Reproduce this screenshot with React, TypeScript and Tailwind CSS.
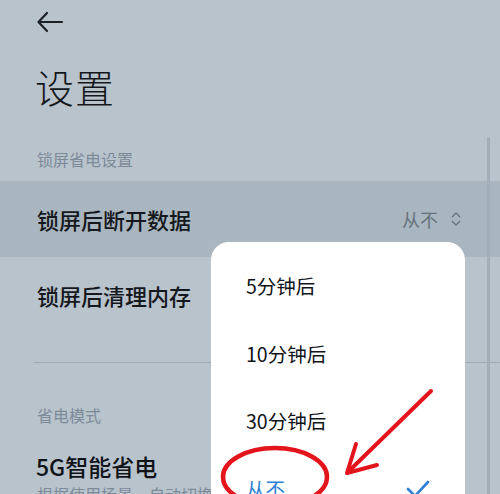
import { ChevronsUpDown } from 'lucide-react'

const FONT = { fontFamily: '"Noto Sans CJK SC", "Noto Sans", sans-serif' }

const OPTIONS = ['5分钟后', '10分钟后', '30分钟后']

export default function App() {
  return (
    <div className="relative w-[500px] h-[494px] overflow-hidden bg-[#b9c3cc]" style={FONT}>
      {/* 返回 */}
      <div className="pt-[9px] pl-[36px] h-[48px]">
        <svg width="28" height="26" viewBox="0 0 28 26" fill="none" stroke="#1c2126" strokeWidth="2.2" strokeLinecap="round" strokeLinejoin="round">
          <path d="M26 13H3" />
          <path d="M11 4L2.5 13L11 22" />
        </svg>
      </div>

      <h1 className="pl-[35px] mt-[10px] h-[56px] text-[39px] leading-[56px] font-light text-[#14181c] tracking-[1px]">设置</h1>

      <div className="pl-[37px] mt-[33px] h-[24px] text-[16px] leading-[24px] text-[#7d8a9a]">锁屏省电设置</div>

      {/* 行 */}
      <div className="mt-[10px] h-[76px] bg-[#aab6bf] flex items-center justify-between pl-[37px] pr-[35px]">
        <span className="text-[22px] font-medium text-[#15191d]">锁屏后断开数据</span>
        <span className="flex items-center gap-[9px] text-[18px] text-[#66717b]">
          从不
          <ChevronsUpDown size={18} strokeWidth={1.6} />
        </span>
      </div>
      <div className="h-[76px] flex items-center pl-[37px]">
        <span className="text-[22px] font-medium text-[#15191d]">锁屏后清理内存</span>
      </div>

      <div className="mt-[29px] ml-[34px] h-[1px] bg-[#9ea9b3]" />

      <div className="pl-[37px] mt-[40px] h-[24px] text-[16px] leading-[24px] text-[#7d8a9a]">省电模式</div>
      <div className="pl-[36px] mt-[24px] text-[23px] leading-[30px] font-medium text-[#101418]">5G智能省电</div>
      <div className="pl-[37px] mt-[3px] text-[16px] leading-[20px] text-[#7d8a9a] whitespace-nowrap">根据使用场景，自动切换网络</div>

      {/* 滚动条 */}
      <div className="absolute left-[487px] top-[137px] w-[3px] h-[400px] rounded-full bg-[#a3aeb8]" />

      {/* 弹出菜单 */}
      <div className="absolute left-[211px] top-[242px] w-[254px] h-[300px] rounded-[18px] bg-white">
        <div className="pt-[22px] pl-[35px]">
          {OPTIONS.map((o) => (
            <div key={o} className="h-[67.5px] text-[19.5px] leading-[44px] text-[#111418]">{o}</div>
          ))}
          <div className="flex items-center justify-between pr-[34px] h-[44px] text-[19.5px] leading-[44px] text-[#2e7fd6]">
            从不
            <svg width="26" height="20" viewBox="0 0 26 20" fill="none" stroke="#2e7fd6" strokeWidth="2.6" strokeLinecap="round" strokeLinejoin="round">
              <path d="M3 10L10 17L23 3" />
            </svg>
          </div>
        </div>
      </div>

      {/* 标注 */}
      <svg className="absolute left-0 top-0 pointer-events-none" width="500" height="494" viewBox="0 0 500 494" fill="none">
        <ellipse cx="275" cy="477" rx="52" ry="29" stroke="#e4141c" strokeWidth="4.5" />
        <path d="M431 391L350 470" stroke="#e4141c" strokeWidth="4" strokeLinecap="round" />
        <path d="M347 473L356 444M347 473L377 465" stroke="#e4141c" strokeWidth="4" strokeLinecap="round" strokeLinejoin="round" />
      </svg>
    </div>
  )
}
